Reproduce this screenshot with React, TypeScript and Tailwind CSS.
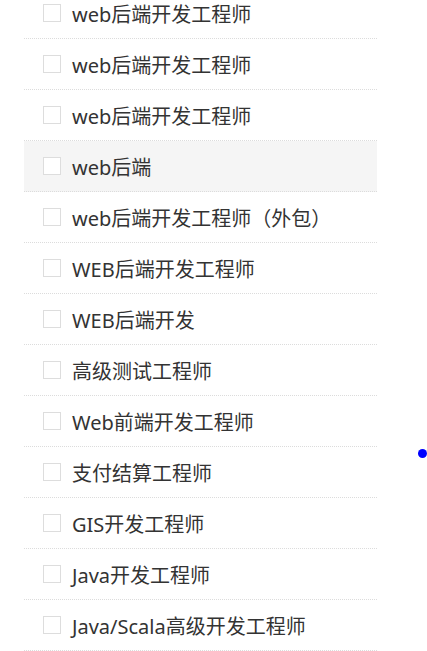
const jobs = [
  "web后端开发工程师",
  "web后端开发工程师",
  "web后端开发工程师",
  "web后端",
  "web后端开发工程师（外包）",
  "WEB后端开发工程师",
  "WEB后端开发",
  "高级测试工程师",
  "Web前端开发工程师",
  "支付结算工程师",
  "GIS开发工程师",
  "Java开发工程师",
  "Java/Scala高级开发工程师",
];

function JobRow({ name, active }: { name: string; active?: boolean }) {
  return (
    <li
      className={
        "flex h-[51px] items-center border-b border-dotted border-[#dcdcdc] pl-[19px] " +
        (active ? "bg-[#f5f5f5]" : "")
      }
    >
      <span className="box-border h-[18px] w-[18px] shrink-0 border border-[#dddddd] bg-white" />
      <span className="ml-[11px] pt-[3px] text-[20px] leading-none text-[#333333]">{name}</span>
    </li>
  );
}

export default function App() {
  return (
    <div
      className="relative h-[651px] w-[427px] overflow-hidden bg-white"
      style={{ fontFamily: '"Noto Sans", "Noto Sans CJK SC", sans-serif' }}
    >
      <ul className="-mt-[12px] ml-[24px] w-[353px]">
        {jobs.map((j, i) => (
          <JobRow key={i} name={j} active={i === 3} />
        ))}
      </ul>
      <div className="absolute left-[418px] top-[449px] h-[9px] w-[9px] rounded-full bg-[#0000ff]" />
    </div>
  );
}
